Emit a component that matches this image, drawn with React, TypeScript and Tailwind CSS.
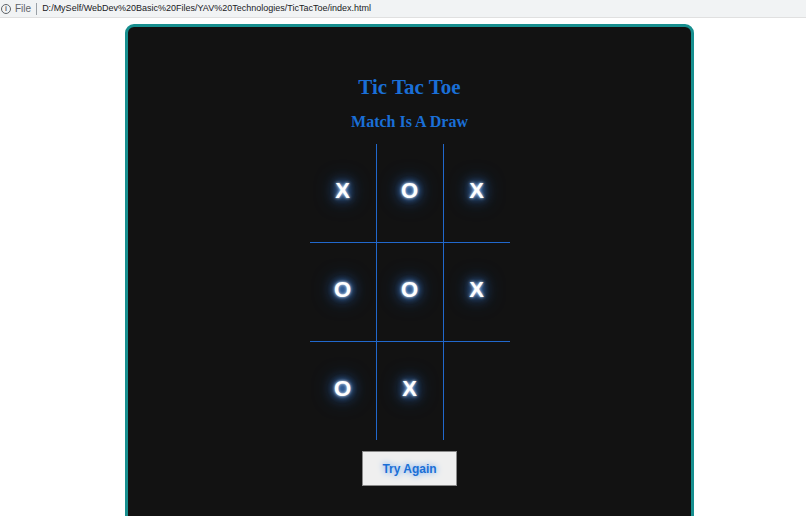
import React from "react";

const board = ["X", "O", "X", "O", "O", "X", "O", "X", ""];

const Cell = ({ value }: { value: string }) => (
  <div className="flex items-center justify-center h-[98px] pb-[6px] bg-[#121212]">
    <span className="font-['Liberation_Sans',Arial,sans-serif] font-bold text-[22px] text-white [text-shadow:0_0_3px_#e6f1ff,0_0_7px_#5aa0f7,0_0_13px_#3582ea,0_0_22px_#1f66cc]">
      {value}
    </span>
  </div>
);

const App = () => {
  return (
    <div className="w-full h-[516px] overflow-hidden bg-white">
      <div className="h-[18px] bg-[#f1f3f4] border-b border-[#e0e0e0] flex items-center pl-[1px] text-[9px] font-['Liberation_Sans',Arial,sans-serif] leading-none">
        <span className="w-[10px] h-[10px] rounded-full border border-[#5f6368] text-[7px] flex items-center justify-center text-[#5f6368] font-bold">
          i
        </span>
        <span className="ml-[4px] text-[10px] text-[#5f6368]">File</span>
        <span className="ml-[5px] w-px h-[12px] bg-[#9aa0a6]" />
        <span className="ml-[5px] text-[#202124]">
          D:/MySelf/WebDev%20Basic%20Files/YAV%20Technologies/TicTacToe/index.html
        </span>
      </div>

      <div className="flex justify-center pt-[6px]">
        <div className="w-[569px] h-[520px] ml-[13px] rounded-[9px] border-[3px] border-[#178f8f] bg-[#121212] flex flex-col items-center">
          <h1 className="mt-[48px] font-['Liberation_Serif','Times_New_Roman',serif] font-bold text-[21px] leading-[24px] text-[#1a6fd6]">
            Tic Tac Toe
          </h1>
          <h2 className="mt-[13px] font-['Liberation_Serif','Times_New_Roman',serif] font-bold text-[16px] leading-[20px] text-[#1a6fd6]">
            Match Is A Draw
          </h2>
          {/* blue grid lines come from the gaps between cells */}
          <div className="mt-[12px] w-[200px] grid grid-cols-[66px_66px_66px] gap-px bg-[#2168cc]">
            {board.map((v, i) => (
              <Cell key={i} value={v} />
            ))}
          </div>
          <button className="mt-[11px] w-[95px] h-[35px] bg-[#efefef] border border-[#8a8a8a] font-['Liberation_Sans',Arial,sans-serif] font-bold text-[12px] text-[#1a6fd6] [text-shadow:0_0_6px_#5a9cf0]">
            Try Again
          </button>
        </div>
      </div>
    </div>
  );
};

export default App;
